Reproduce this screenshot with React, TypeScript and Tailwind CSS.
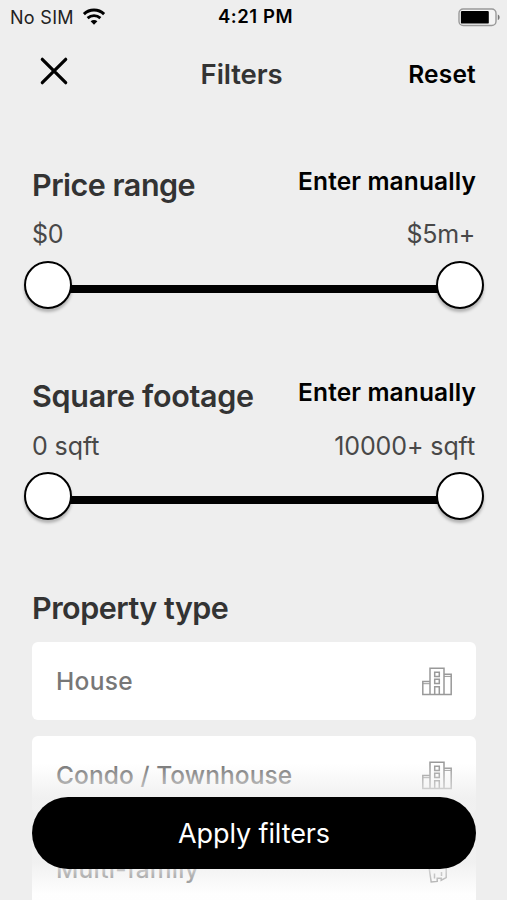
import { useState } from "react";

type RangeSectionProps = {
  title: string;
  min: string;
  max: string;
  titleClass: string;
  minClass: string;
  maxClass: string;
};

function StatusBar() {
  return (
    <div className="flex h-[34px] items-center pl-[10px] pr-[6px] text-[#222]">
      <div className="flex flex-1 items-center gap-[8px]">
        <span className="text-[18px] tracking-[0.3px]">No SIM</span>
        <svg width="24" height="18" viewBox="0 0 24 18" fill="none" stroke="#000" aria-hidden="true">
          <path d="M1.9 6.1C7.6.7 16.4.7 22.1 6.1" strokeWidth="3" />
          <path d="M5.6 10.1C9.3 6.7 14.7 6.7 18.4 10.1" strokeWidth="2.8" />
          <path d="M8.6 13.2C10.6 11.5 13.4 11.5 15.4 13.2L12 16.8Z" fill="#000" stroke="none" />
        </svg>
      </div>
      <span className="text-[18.5px] font-semibold tracking-[0.55px] text-black">4:21 PM</span>
      <div className="flex flex-1 items-center justify-end">
        <svg width="43" height="19" viewBox="0 0 43 19" aria-hidden="true">
          <rect x="1" y="1" width="37" height="16.5" rx="4.2" fill="#f4f4f4" stroke="#999" strokeWidth="1.4" />
          <rect x="2.9" y="2.9" width="27.9" height="12.7" rx="1.2" fill="#000" />
          <path d="M39.8 6.5c2.4.6 2.4 5 0 5.6z" fill="#777" />
        </svg>
      </div>
    </div>
  );
}

function Thumb() {
  return (
    <span className="relative size-12 rounded-full border-[2.5px] border-black bg-white shadow-[0_3px_3px_rgba(0,0,0,0.25)]" />
  );
}

function RangeSection({ title, min, max, titleClass, minClass, maxClass }: RangeSectionProps) {
  return (
    <section className="h-[211.5px]">
      <div className="flex h-[46.5px] justify-between pr-[31px] pl-8">
        <h2 className={`text-[30.5px] leading-[38px] font-semibold text-[#333] ${titleClass}`}>{title}</h2>
        <button className="h-[30px] text-[24.5px] leading-[30px] font-semibold tracking-[0.12px] text-black">
          Enter manually
        </button>
      </div>
      <div className="flex h-[48.5px] items-center justify-between pr-[32px] pb-[3px] pl-8 text-[25px] text-[#484848]">
        <span className={minClass}>{min}</span>
        <span className={maxClass}>{max}</span>
      </div>
      <div className="flex h-12 items-center pr-[23px] pl-6">
        <Thumb />
        <span className="mt-[8px] -mx-1 h-2 flex-1 bg-black" />
        <Thumb />
      </div>
    </section>
  );
}

function BuildingIcon() {
  return (
    <svg width="30" height="29" viewBox="0 0 30 29" fill="none" stroke="#999" strokeWidth="1.5" aria-hidden="true">
      <path d="M8 27.5V1.3h14v26.2" />
      <path d="M8 14.5H.8v13h28.4V7.2H22" />
      <path d="M.8 16.7H8M22 9.4h7.2" strokeWidth="1" />
      <path d="M12.7 5.2h4.6v4.3h-4.6zM12.7 12.2h4.6v4.3h-4.6zM12.7 27.5v-7.8h4.6v7.8" />
    </svg>
  );
}

function HomesIcon() {
  return (
    <svg width="30" height="29" viewBox="0 0 30 29" fill="none" stroke="#999" strokeWidth="1.5" aria-hidden="true">
      <path d="M4 12 15 2l12 10M7 12l2.2 15 6-.6v-3.2h4v2l5-2.6V12" />
      <path d="M12.5 23.5v-5M19.5 21v-4" />
    </svg>
  );
}

const propertyTypes = [
  { name: "House", className: "tracking-[0.3px]", icon: <BuildingIcon /> },
  { name: "Condo / Townhouse", className: "tracking-[0.08px]", icon: <BuildingIcon /> },
  { name: "Multi-family", className: "tracking-[0.2px]", icon: <HomesIcon /> },
];

export default function App() {
  const [selected, setSelected] = useState<string | null>(null);

  return (
    <div className="relative h-[900px] w-[507px] overflow-hidden bg-[#eee] font-['Inter','Liberation_Sans',sans-serif]">
      <StatusBar />
      <header className="flex h-[80px] items-center justify-between pr-[31px] pl-10">
        <button aria-label="Close" className="mb-[6px] block w-[35px]">
          <svg width="28" height="28" viewBox="0 0 28 28" stroke="#000" strokeWidth="3.2" strokeLinecap="round">
            <path d="M2.3 2.3 25.7 25.7M25.7 2.3 2.3 25.7" />
          </svg>
        </button>
        <h1 className="mt-px text-[27.5px] font-semibold tracking-[-0.1px] text-[#333]">Filters</h1>
        <button className="text-[24.5px] font-semibold tracking-[0.2px] text-black">Reset</button>
      </header>

      <main className="pt-[51.5px]">
        <RangeSection
          title="Price range"
          min="$0"
          max="$5m+"
          titleClass="tracking-[-0.5px]"
          minClass="tracking-[-0.3px]"
          maxClass="tracking-[-0.3px]"
        />
        <RangeSection
          title="Square footage"
          min="0 sqft"
          max="10000+ sqft"
          titleClass="tracking-[-0.3px]"
          minClass="tracking-[-0.1px]"
          maxClass="tracking-[-0.1px]"
        />
        <section className="pr-[31px] pl-8">
          <h2 className="h-[53.5px] text-[30.5px] leading-[38px] font-semibold tracking-[-0.5px] text-[#333]">
            Property type
          </h2>
          <div className="flex flex-col gap-4">
            {propertyTypes.map((type) => (
              <button
                key={type.name}
                onClick={() => setSelected(type.name)}
                aria-pressed={selected === type.name}
                className="flex h-[78px] items-center justify-between rounded-md bg-white px-6 pt-px text-[24.5px] font-medium text-[#777]"
              >
                <span className={type.className}>{type.name}</span>
                {type.icon}
              </button>
            ))}
          </div>
        </section>
      </main>

      {/* Fades the list out behind the sticky button */}
      <footer className="absolute inset-x-0 bottom-0 flex h-[136px] items-start bg-[linear-gradient(to_bottom,rgba(238,238,238,0)_0px,rgba(238,238,238,0.85)_34px,rgba(238,238,238,0.85)_98px,rgba(238,238,238,0.05)_130px)] pt-[32.5px] pr-[31px] pl-8">
        <button className="h-[72px] w-full rounded-full bg-black pt-[3px] text-[27px] tracking-[-0.1px] text-white">
          Apply filters
        </button>
      </footer>
    </div>
  );
}
